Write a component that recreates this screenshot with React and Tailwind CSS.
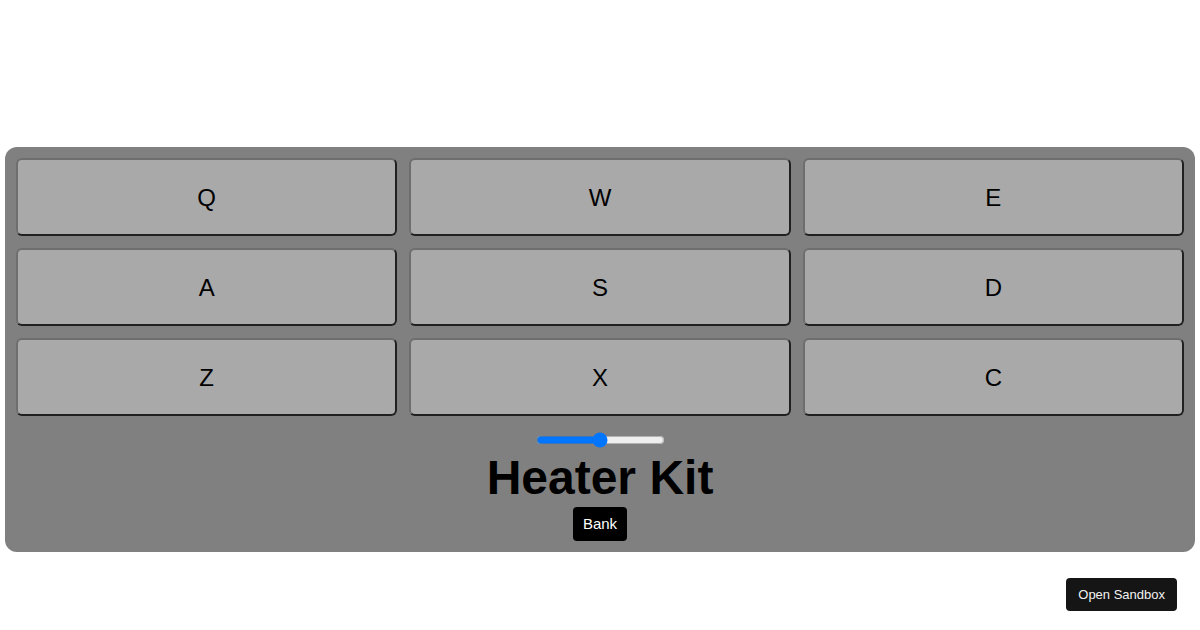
import { useState } from 'react';

const PADS = ['Q', 'W', 'E', 'A', 'S', 'D', 'Z', 'X', 'C'];

export default function App() {
  const [volume, setVolume] = useState(50);

  return (
    <div className="h-[630px] overflow-hidden bg-white px-[5px] pt-[147px] font-['Liberation_Sans',Arial,sans-serif]">
      <div className="rounded-[12px] bg-[#808080] px-[11px] pt-[11px] pb-[11px]">
        {/* drum pads */}
        <div className="grid grid-cols-3 gap-x-[12px] gap-y-[12px]">
          {PADS.map((key) => (
            <button
              key={key}
              className="flex h-[78px] items-center justify-center rounded-[6px] border-2 border-t-[#6e6e6e] border-l-[#6e6e6e] border-b-[#202020] border-r-[#202020] bg-[#a9a9a9] pt-[1px] text-2xl text-black"
            >
              {key}
            </button>
          ))}
        </div>

        <div className="flex flex-col items-center">
          <input
            type="range"
            min="0"
            max="100"
            value={volume}
            onChange={(e) => setVolume(e.target.value)}
            className="mt-[16px] h-[16px] w-[129px] accent-[#0075ff]"
          />
          <h1 className="mt-[2px] text-[48px] leading-[55px] font-bold text-black">Heater Kit</h1>
          <button className="mt-[2px] rounded-[4px] bg-black px-[10px] py-[7px] text-[15px] leading-[20px] text-white">
            Bank
          </button>
        </div>
      </div>

      <button className="fixed right-[23px] bottom-[19px] rounded-[4px] bg-[#151515] px-[12px] py-[8px] text-[13px] leading-[17px] text-[#f2f2f2]">
        Open Sandbox
      </button>
    </div>
  );
}
